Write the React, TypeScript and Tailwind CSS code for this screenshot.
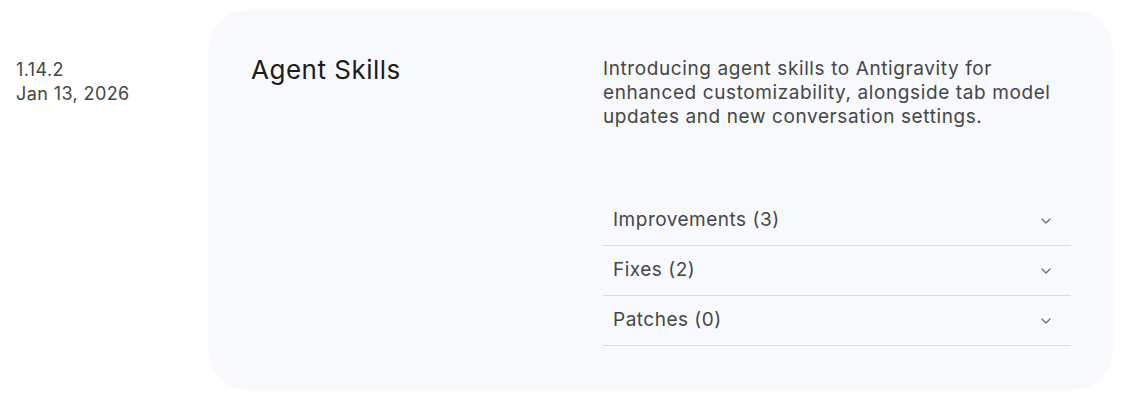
import React from "react";

const Chevron = () => (
  <svg width="10" height="6" viewBox="0 0 10 6" fill="none" stroke="#5f6368" strokeWidth="1.1" strokeLinecap="round" strokeLinejoin="round">
    <path d="M1 1l4 4 4-4" />
  </svg>
);

export default function App() {
  const rows = ["Improvements (3)", "Fixes (2)", "Patches (0)"];
  return (
    <div className="flex bg-white pt-[10px] pl-4 min-h-[402px]" style={{ fontFamily: "Inter, 'Noto Sans', sans-serif" }}>
      <div className="w-[192px] shrink-0 pt-[48px] text-[18px] leading-6 tracking-[0.4px] text-[#444746]">
        <div>1.14.2</div>
        <div>Jan 13, 2026</div>
      </div>
      <div className="w-[905px] h-[380px] rounded-[40px] bg-[#f8f9fc] flex pl-[43px] pr-[42px] pt-[44px]">
        <div className="w-[352px] shrink-0 text-[26px] leading-8 tracking-[0.5px] text-[#1b1c1d]">Agent Skills</div>
        <div className="flex-1">
          <p className="max-w-[462px] text-[19px] leading-6 tracking-[0.6px] text-[#444746] pt-[3px]">
            Introducing agent skills to Antigravity for enhanced customizability, alongside tab model updates and new conversation settings.
          </p>
          <div className="mt-[67px]">
            {rows.map((r) => (
              <div key={r} className="h-[50px] flex items-center justify-between border-b border-[#dadce0] pl-[10px] pr-[20px] text-[19px] tracking-[0.5px] text-[#444746]">
                <span>{r}</span>
                <Chevron />
              </div>
            ))}
          </div>
        </div>
      </div>
    </div>
  );
}
